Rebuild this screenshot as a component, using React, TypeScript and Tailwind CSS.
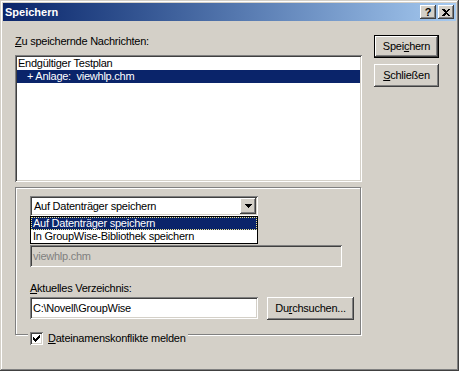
import React from 'react';

const raised =
  'shadow-[inset_-1px_-1px_0_#404040,inset_1px_1px_0_#ffffff,inset_-2px_-2px_0_#808080,inset_2px_2px_0_#d4d0c8]';
const sunken =
  'shadow-[inset_1px_1px_0_#808080,inset_-1px_-1px_0_#ffffff,inset_2px_2px_0_#404040,inset_-2px_-2px_0_#d4d0c8]';

const Check: React.FC = () => (
  <svg width="7" height="7" viewBox="0 0 7 7" shapeRendering="crispEdges">
    <rect x="6" y="0" width="1" height="1" fill="#000" />
    <rect x="5" y="1" width="2" height="1" fill="#000" />
    <rect x="0" y="2" width="1" height="1" fill="#000" />
    <rect x="4" y="2" width="3" height="1" fill="#000" />
    <rect x="0" y="3" width="2" height="1" fill="#000" />
    <rect x="3" y="3" width="3" height="1" fill="#000" />
    <rect x="0" y="4" width="5" height="1" fill="#000" />
    <rect x="1" y="5" width="3" height="1" fill="#000" />
    <rect x="2" y="6" width="1" height="1" fill="#000" />
  </svg>
);

const App: React.FC = () => {
  return (
    <div
      className={`w-[459px] h-[371px] bg-[#d4d0c8] p-[3px] flex flex-col text-[11px] leading-[13px] tracking-[-0.25px] text-black shadow-[inset_-1px_-1px_0_#404040,inset_1px_1px_0_#d4d0c8,inset_-2px_-2px_0_#808080,inset_2px_2px_0_#ffffff]`}
      style={{ fontFamily: '"Liberation Sans", Arial, sans-serif' }}
    >
      {/* title bar */}
      <div className="h-[18px] flex items-center pl-[2px] pr-[2px] bg-linear-to-r from-[#0a246a] to-[#a6caf0]">
        <span className="font-bold text-white tracking-normal">Speichern</span>
        <div className="ml-auto flex gap-[2px]">
          <div className={`w-[16px] h-[14px] bg-[#d4d0c8] flex items-center justify-center font-bold text-[11px] ${raised}`}>
            ?
          </div>
          <div className={`w-[16px] h-[14px] bg-[#d4d0c8] flex items-center justify-center ${raised}`}>
            <svg width="8" height="7" viewBox="0 0 8 7" shapeRendering="crispEdges">
              <path d="M0 0h2l2 2 2-2h2L5 3.5 8 7H6L4 5 2 7H0l3-3.5z" fill="#000" />
            </svg>
          </div>
        </div>
      </div>

      <div className="flex pl-[12px] pt-[14px]">
        {/* left column */}
        <div className="w-[347px] flex flex-col">
          <div className="h-[13px]">
            <span className="underline">Z</span>u speichernde Nachrichten:
          </div>

          <div className={`mt-[7px] h-[127px] bg-white p-[2px] ${sunken}`}>
            <div className="h-[13px] pl-[1px]">Endgültiger Testplan</div>
            <div className="h-[13px] pl-[10px] bg-[#0a246a] text-white">+ Anlage:&nbsp; viewhlp.chm</div>
          </div>

          {/* group box */}
          <div className="relative mt-[5px] w-[346px] h-[148px] border border-[#808080] shadow-[1px_1px_0_#ffffff,inset_1px_1px_0_#ffffff] pt-[8px] pl-[14px]">
            <div className="relative w-[228px] z-10">
              <div className={`h-[20px] bg-white p-[2px] flex items-center ${sunken}`}>
                <span className="flex-1 pl-[2px]">Auf Datenträger speichern</span>
                <div className={`w-[16px] h-[16px] bg-[#d4d0c8] flex items-center justify-center ${raised}`}>
                  <svg width="7" height="4" viewBox="0 0 7 4" shapeRendering="crispEdges">
                    <path d="M0 0h7L3.5 4z" fill="#000" />
                  </svg>
                </div>
              </div>
              <div className="absolute top-[20px] left-0 w-[228px] h-[28px] bg-white border border-black">
                <div className="h-[13px] pl-[2px] bg-[#0a246a] text-white outline outline-1 outline-dotted outline-[#f0e68c] -outline-offset-1">
                  Auf Datenträger speichern
                </div>
                <div className="h-[13px] pl-[2px]">In GroupWise-Bibliothek speichern</div>
              </div>
            </div>

            <div className={`mt-[29px] w-[312px] h-[22px] bg-[#d4d0c8] text-[#808080] flex items-center pl-[3px] ${sunken}`}>
              viewhlp.chm
            </div>

            <div className="mt-[15px] h-[13px]">
              <span className="underline">A</span>ktuelles Verzeichnis:
            </div>

            <div className="mt-[2px] flex items-start">
              <div className={`w-[228px] h-[22px] bg-white flex items-center pl-[3px] ${sunken}`}>
                C:\Novell\GroupWise
              </div>
              <div className={`ml-[9px] w-[87px] h-[23px] bg-[#d4d0c8] flex items-center justify-center ${raised}`}>
                <span>
                  Du<span className="underline">r</span>chsuchen...
                </span>
              </div>
            </div>

            {/* checkbox sitting on the bottom edge */}
            <div className="absolute left-[12px] top-[143px] h-[15px] px-[2px] bg-[#d4d0c8] flex items-center gap-[5px]">
              <div className={`w-[13px] h-[13px] bg-white flex items-center justify-center ${sunken}`}>
                <Check />
              </div>
              <span>
                <span className="underline">D</span>ateinamenskonflikte melden
              </span>
            </div>
          </div>
        </div>

        {/* right column */}
        <div className="ml-[12px] flex flex-col">
          <div className="w-[65px] h-[23px] border border-black">
            <div className={`w-full h-full bg-[#d4d0c8] flex items-center justify-center ${raised}`}>
              <span>
                Spei<span className="underline">c</span>hern
              </span>
            </div>
          </div>
          <div className={`mt-[6px] w-[65px] h-[23px] bg-[#d4d0c8] flex items-center justify-center ${raised}`}>
            <span>
              <span className="underline">S</span>chließen
            </span>
          </div>
        </div>
      </div>
    </div>
  );
};

export default App;
